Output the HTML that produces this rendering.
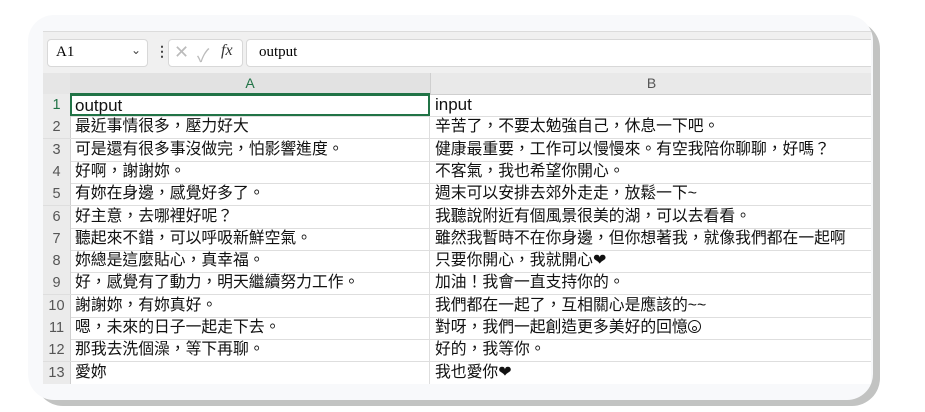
<!DOCTYPE html>
<html><head><meta charset="utf-8"><style>
body{margin:0;width:925px;height:412px;background:#fff;position:relative;overflow:hidden;font-family:"Liberation Sans","Noto Sans CJK TC",sans-serif}
.shadow{position:absolute;left:35px;top:21px;width:845px;height:385px;background:#c2c3c2;border-radius:28px}
.panel{position:absolute;left:28px;top:15px;width:845px;height:385px;background:#f8f9fb;border-radius:26px}
.sheet{position:absolute;left:43px;top:31px;width:828px;height:353px;background:#fff;overflow:hidden}
.tb{position:absolute;left:0;top:0;width:828px;height:42px;background:#f0f0f0;border-top:1px solid #dcdcdc}
.box{position:absolute;background:#fff;border:1px solid #d8d8d8;border-radius:4px;top:7px;height:26px}
.ch{position:absolute;top:42px;height:21px;background:#e9e9e9;border-bottom:1px solid #cfcfcf;font-size:14px;color:#555;text-align:center;line-height:21px}
.row{position:absolute;left:0;width:828px;height:22px;border-bottom:1px solid #dedede}
.rn{position:absolute;left:0;top:0;width:27px;height:100%;background:#ebebeb;color:#555;font-size:14.5px;text-align:center;line-height:23px;border-right:1px solid #cfcfcf}
.c{position:absolute;top:0;height:100%;font-size:15.8px;line-height:22px;color:#111;white-space:nowrap;padding-left:5px;box-sizing:border-box}
.a{left:27px;width:360px;border-right:1px solid #dedede}
.b{left:387px;width:441px}
</style></head><body>
<div class="shadow"></div>
<div class="panel"></div>
<div class="sheet">
 <div class="tb">
  <div class="box" style="left:4px;width:99px"><span style="position:absolute;left:8px;top:4px;font-family:'Liberation Serif',serif;font-size:15px">A1</span><span style="position:absolute;right:6px;top:3px;font-size:12px;color:#444">⌄</span></div>
  <div style="position:absolute;left:112px;top:12px;font-size:14px;color:#444;line-height:14px;font-weight:bold">⋮</div>
  <div class="box" style="left:125px;width:73px;color:#bbb;font-size:18px"><span style="position:absolute;left:5px;top:2px">✕</span><span style="position:absolute;left:28px;top:2px">✓</span><span style="position:absolute;left:52px;top:2px;color:#333;font-family:'Liberation Serif',serif;font-style:italic;font-size:16px">fx</span></div>
  <div class="box" style="left:203px;width:640px"><span style="position:absolute;left:12px;top:4px;font-family:'Liberation Serif',serif;font-size:15px">output</span></div>
 </div>
 <div class="ch" style="left:0;width:27px;background:#e6e6e6"></div>
 <div class="ch" style="left:27px;width:360px;color:#217346;border-bottom:2px solid #217346;height:20px;background:#e2e2e2">A</div>
 <div class="ch" style="left:387px;width:441px;border-left:1px solid #cfcfcf">B</div>
 <div style="position:absolute;top:63px;left:0;width:828px">
 <div class="row" style="top:0"><div class="rn" style="color:#217346">1</div><div class="c a" style="font-size:17px;border:2px solid #217346;line-height:19px;padding-left:3px">output</div><div class="c b" style="font-size:17px">input</div></div>
 <div class="row" style="top:22.3px"><div class="rn">2</div><div class="c a">最近事情很多，壓力好大</div><div class="c b">辛苦了，不要太勉強自己，休息一下吧。</div></div>
 <div class="row" style="top:44.6px"><div class="rn">3</div><div class="c a">可是還有很多事沒做完，怕影響進度。</div><div class="c b">健康最重要，工作可以慢慢來。有空我陪你聊聊，好嗎？</div></div>
 <div class="row" style="top:66.9px"><div class="rn">4</div><div class="c a">好啊，謝謝妳。</div><div class="c b">不客氣，我也希望你開心。</div></div>
 <div class="row" style="top:89.2px"><div class="rn">5</div><div class="c a">有妳在身邊，感覺好多了。</div><div class="c b">週末可以安排去郊外走走，放鬆一下~</div></div>
 <div class="row" style="top:111.5px"><div class="rn">6</div><div class="c a">好主意，去哪裡好呢？</div><div class="c b">我聽說附近有個風景很美的湖，可以去看看。</div></div>
 <div class="row" style="top:133.8px"><div class="rn">7</div><div class="c a">聽起來不錯，可以呼吸新鮮空氣。</div><div class="c b">雖然我暫時不在你身邊，但你想著我，就像我們都在一起啊</div></div>
 <div class="row" style="top:156.1px"><div class="rn">8</div><div class="c a">妳總是這麼貼心，真幸福。</div><div class="c b">只要你開心，我就開心❤</div></div>
 <div class="row" style="top:178.4px"><div class="rn">9</div><div class="c a">好，感覺有了動力，明天繼續努力工作。</div><div class="c b">加油！我會一直支持你的。</div></div>
 <div class="row" style="top:200.7px"><div class="rn">10</div><div class="c a">謝謝妳，有妳真好。</div><div class="c b">我們都在一起了，互相關心是應該的~~</div></div>
 <div class="row" style="top:223px"><div class="rn">11</div><div class="c a">嗯，未來的日子一起走下去。</div><div class="c b">對呀，我們一起創造更多美好的回憶<span style="display:inline-block;width:13px;height:13px;border:1.5px solid #111;border-radius:50%;box-sizing:border-box;vertical-align:-1px;position:relative"><span style="position:absolute;left:3.5px;top:5px;width:3px;height:3px;border:1px solid #111;border-radius:50%"></span></span></div></div>
 <div class="row" style="top:245.3px"><div class="rn">12</div><div class="c a">那我去洗個澡，等下再聊。</div><div class="c b">好的，我等你。</div></div>
 <div class="row" style="top:267.6px;border-bottom:none"><div class="rn">13</div><div class="c a">愛妳</div><div class="c b">我也愛你❤</div></div>
 </div>
</div>
</body></html>
